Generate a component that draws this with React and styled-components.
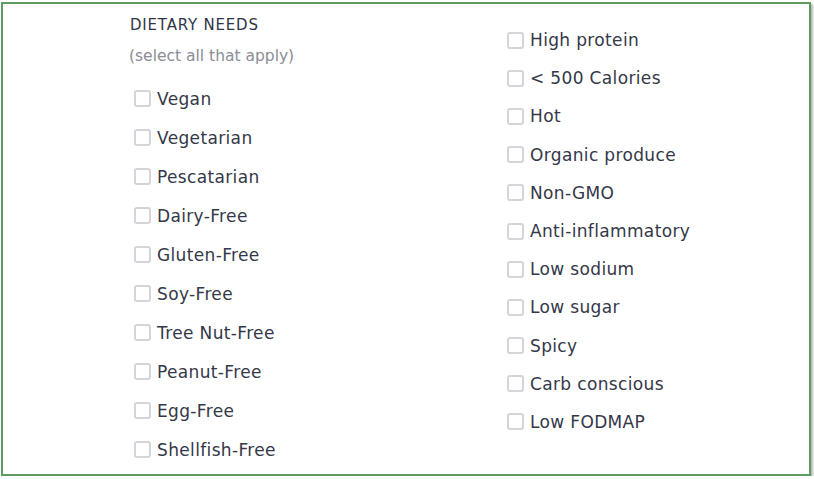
import React from "react";
import styled, { createGlobalStyle } from "styled-components";

const Global = createGlobalStyle`
  html, body {
    margin: 0;
    padding: 0;
    background: #ffffff;
  }
  body {
    font-family: "DejaVu Sans", "Open Sans", sans-serif;
  }
`;

const Card = styled.div`
  box-sizing: border-box;
  margin: 2px 0 0 1px;
  width: 810px;
  height: 474px;
  border: 2px solid #5c9c63;
  box-shadow: 2px 2px 2px rgba(0, 0, 0, 0.28);
  display: flex;
  padding: 0 0 0 126px;
`;

const Column = styled.div`
  display: flex;
  flex-direction: column;
  width: ${(p) => p.$width}px;
  padding-top: ${(p) => p.$top}px;
`;

const Heading = styled.div`
  font-size: 15px;
  color: #2f3446;
  line-height: 18px;
  letter-spacing: 0.8px;
  margin-left: 1px;
`;

const Sub = styled.div`
  font-size: 15.5px;
  color: #8a8d96;
  line-height: 20px;
  margin: 12px 0 13px 0;
`;

const Option = styled.label`
  display: flex;
  align-items: center;
  height: ${(p) => p.$step}px;
  padding-left: 5px;
  font-size: 17px;
  letter-spacing: 0.35px;
  color: #343848;
  cursor: pointer;
`;

const Box = styled.span`
  box-sizing: border-box;
  width: 17px;
  height: 17px;
  border: 2px solid #d3d5da;
  border-radius: 3px;
  margin-right: 6px;
  flex: none;
`;

const left = [
  "Vegan",
  "Vegetarian",
  "Pescatarian",
  "Dairy-Free",
  "Gluten-Free",
  "Soy-Free",
  "Tree Nut-Free",
  "Peanut-Free",
  "Egg-Free",
  "Shellfish-Free",
];

const right = [
  "High protein",
  "< 500 Calories",
  "Hot",
  "Organic produce",
  "Non-GMO",
  "Anti-inflammatory",
  "Low sodium",
  "Low sugar",
  "Spicy",
  "Carb conscious",
  "Low FODMAP",
];

export default function App() {
  return (
    <>
      <Global />
      <Card>
        <Column $width={373} $top={12}>
          <Heading>DIETARY NEEDS</Heading>
          <Sub>(select all that apply)</Sub>
          {left.map((t) => (
            <Option key={t} $step={39}>
              <Box />
              {t}
            </Option>
          ))}
        </Column>
        <Column $width={300} $top={17}>
          {right.map((t) => (
            <Option key={t} $step={38.2}>
              <Box />
              {t}
            </Option>
          ))}
        </Column>
      </Card>
    </>
  );
}
